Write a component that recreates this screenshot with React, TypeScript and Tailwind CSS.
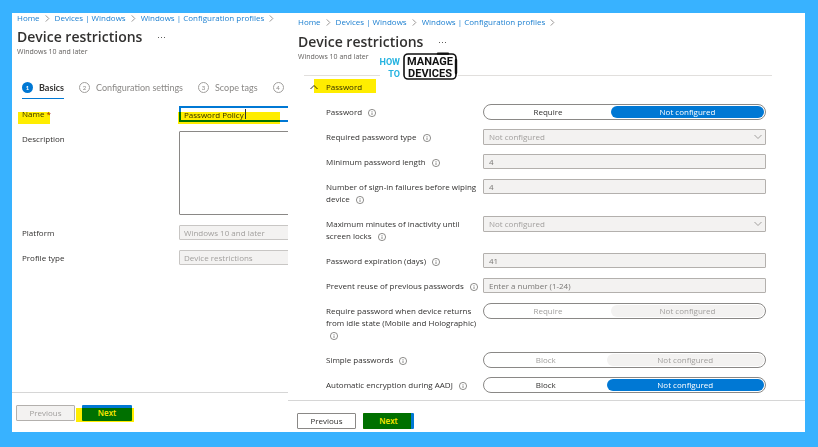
import { useState } from "react";
import type { ReactNode } from "react";

const crumbs = ["Home", "Devices | Windows", "Windows | Configuration profiles"];

const steps = ["Basics", "Configuration settings", "Scope tags", ""];

function Chevron({ className }: { className: string }) {
  return (
    <svg viewBox="0 0 8 8" className={className} fill="none" stroke="currentColor" aria-hidden="true">
      <path d="M0.5 2 4 5.5 7.5 2" />
    </svg>
  );
}

function InfoIcon() {
  return (
    <svg
      viewBox="0 0 16 16"
      className="ml-1 inline-block size-2 align-middle text-[#605e5c]"
      fill="none"
      stroke="currentColor"
      strokeWidth="1.4"
      aria-hidden="true"
    >
      <circle cx="8" cy="8" r="7.2" />
      <path d="M8 7v5M8 4v1.6" />
    </svg>
  );
}

function Breadcrumbs() {
  return (
    <nav aria-label="Breadcrumb" className="whitespace-nowrap leading-[10px] text-[#1b7fd0]">
      <ol className="flex items-center">
        {crumbs.map((crumb) => (
          <li key={crumb} className="flex items-center">
            <a href="#" className="hover:underline">
              {crumb}
            </a>
            <Chevron className="mx-1 size-[7px] -rotate-90 text-[#8a8886]" />
          </li>
        ))}
      </ol>
    </nav>
  );
}

function PageTitle() {
  return (
    <header>
      <div className="flex items-center gap-4">
        <h1 className="text-[14px] font-semibold leading-5 text-[#323130]">Device restrictions</h1>
        <button type="button" aria-label="More" className="flex gap-[2px]">
          <span className="size-px bg-[#605e5c]" />
          <span className="size-px bg-[#605e5c]" />
          <span className="size-px bg-[#605e5c]" />
        </button>
      </div>
      <p className="text-[7px] leading-[10px] text-[#605e5c]">Windows 10 and later</p>
    </header>
  );
}

function Field({ id, label, children }: { id: string; label: ReactNode; children: ReactNode }) {
  return (
    <div className="grid grid-cols-[157px_1fr] items-start">
      <label htmlFor={id} className="pt-[2px] pb-[11px] leading-3">
        {label}
      </label>
      {children}
    </div>
  );
}

function Toggle({ id, first, disabled }: { id: string; first: string; disabled?: boolean }) {
  const [value, setValue] = useState("Not configured");
  return (
    <div
      role="radiogroup"
      aria-labelledby={`${id}-label`}
      className="flex h-4 rounded-full border border-[#8a8886] p-px text-center leading-3"
    >
      {[first, "Not configured"].map((option) => (
        <label
          key={option}
          className={
            disabled
              ? "flex-auto rounded-full text-[#a19f9d] has-checked:bg-[#f3f2f1]"
              : "flex-auto rounded-full has-checked:bg-[#0078d4] has-checked:text-white"
          }
        >
          <input
            type="radio"
            name={id}
            className="sr-only"
            checked={value === option}
            disabled={disabled}
            onChange={() => setValue(option)}
          />
          {option}
        </label>
      ))}
    </div>
  );
}

function ToggleField({ id, label, first, disabled }: { id: string; label: string; first: string; disabled?: boolean }) {
  return (
    <div className="grid grid-cols-[157px_1fr] items-start">
      <span id={`${id}-label`} className="pt-[2px] pb-[11px] leading-3">
        {label} <InfoIcon />
      </span>
      <Toggle id={id} first={first} disabled={disabled} />
    </div>
  );
}

function SelectField({ id, label }: { id: string; label: string }) {
  return (
    <Field id={id} label={<>{label} <InfoIcon /></>}>
      <div className="relative">
        <select
          id={id}
          disabled
          className="block h-4 w-full appearance-none rounded-[1px] border border-[#b3b0ad] bg-[#f3f2f1] px-[5px] leading-3 text-[#a19f9d] opacity-100"
        >
          <option>Not configured</option>
        </select>
        <Chevron className="pointer-events-none absolute top-1 right-1 size-2 text-[#a19f9d]" />
      </div>
    </Field>
  );
}

function NumberField({ id, label, value, placeholder }: { id: string; label: string; value?: string; placeholder?: string }) {
  return (
    <Field id={id} label={<>{label} <InfoIcon /></>}>
      <input
        id={id}
        type="text"
        disabled
        defaultValue={value}
        placeholder={placeholder}
        className="h-[15px] w-full rounded-[1px] border border-[#b3b0ad] bg-[#f3f2f1] px-[5px] leading-3 text-[#797775] placeholder:text-[#797775]"
      />
    </Field>
  );
}

function BasicsPanel() {
  return (
    <section className="flex min-w-0 flex-col overflow-x-clip">
      <div className="pl-[5px]">
        <Breadcrumbs />
        <div className="mt-1">
          <PageTitle />
        </div>
      </div>

      <ol className="mt-[25px] flex gap-[15px] pl-[10px] font-[Lato,sans-serif] text-[9px] leading-3 whitespace-nowrap text-[#8a8886]">
        {steps.map((step, i) => (
          <li
            key={i}
            className={
              i === 0
                ? "flex h-[17px] items-start gap-[6px] border-b border-b-[#0078d4] font-bold text-[#323130]"
                : "flex h-[17px] items-start gap-[6px]"
            }
          >
            <span
              className={
                i === 0
                  ? "flex size-[11px] items-center justify-center rounded-full bg-[#0078d4] text-[6px] text-white"
                  : "flex size-[11px] items-center justify-center rounded-full border border-[#a19f9d] text-[6px]"
              }
            >
              {i + 1}
            </span>
            {step}
          </li>
        ))}
      </ol>

      <form id="basics" className="mt-[7px] pl-[10px]">
        <div className="relative">
          <Field id="name" label={<>Name <span className="text-[#a4262c]">*</span></>}>
            <input
              id="name"
              type="text"
              defaultValue="Password Policy"
              className="h-4 w-[150px] border-2 border-[#0078d4] px-[3px] leading-3 outline-none"
            />
          </Field>
          <span className="pointer-events-none absolute top-[6px] -left-1 h-3 w-8 bg-[#ffed00] mix-blend-multiply" />
          <span className="pointer-events-none absolute top-[6px] left-[156px] h-3 w-[102px] bg-[#ffed00] mix-blend-multiply" />
          <span className="pointer-events-none absolute top-[3px] left-[223px] h-[10px] w-px bg-[#323130]" />
        </div>
        <div className="mb-[10px]">
          <Field id="description" label="Description">
            <textarea
              id="description"
              className="h-[84px] w-[150px] resize-none rounded-[1px] border border-[#8a8886] px-[5px] outline-none"
            />
          </Field>
        </div>
        <Field id="platform" label="Platform">
          <input
            id="platform"
            disabled
            defaultValue="Windows 10 and later"
            className="h-[15px] w-[150px] rounded-[1px] border border-[#c8c6c4] bg-[#f3f2f1] px-1 leading-3 text-[#a19f9d]"
          />
        </Field>
        <Field id="profile" label="Profile type">
          <input
            id="profile"
            disabled
            defaultValue="Device restrictions"
            className="h-[15px] w-[150px] rounded-[1px] border border-[#c8c6c4] bg-[#f3f2f1] px-1 leading-3 text-[#a19f9d]"
          />
        </Field>
      </form>

      <footer className="mt-auto flex gap-[7px] border-t border-[#d6d6d6] pt-3 pb-[11px] pl-1">
        <button
          type="button"
          disabled
          className="h-4 w-[59px] rounded-[1px] border border-[#b3b0ad] bg-[#f3f2f1] leading-3 text-[#a19f9d]"
        >
          Previous
        </button>
        <div className="relative">
          <button type="button" className="block h-4 w-[50px] rounded-[1px] bg-[#0078d4] font-semibold leading-3 text-white">
            Next
          </button>
          <span className="pointer-events-none absolute top-[3px] -left-[6px] h-[14px] w-[58px] bg-[#ffed00] mix-blend-multiply" />
        </div>
      </footer>
    </section>
  );
}

function Logo() {
  return (
    <svg
      viewBox="0 0 78 28"
      className="absolute top-[39px] left-[92px] h-7 w-[78px] bg-white font-[Roboto,'Liberation_Sans',sans-serif] font-bold"
      role="img"
      aria-label="How to manage devices"
    >
      <g fill="#25b3e0" fontSize="9" textAnchor="end">
        <text x="20" y="13">HOW</text>
        <text x="20" y="25">TO</text>
      </g>
      <rect x="24" y="2" width="52" height="25" rx="4" fill="none" stroke="#111" strokeWidth="1.6" />
      <path d="M76 8v13M58 1.6h10" stroke="#111" strokeWidth="2.4" strokeLinecap="round" />
      <g fill="#111" fontSize="11" textAnchor="middle">
        <text x="50" y="13">MANAGE</text>
        <text x="50" y="25">DEVICES</text>
      </g>
    </svg>
  );
}

function SettingsPanel() {
  const [open, setOpen] = useState(true);
  return (
    <section className="relative flex min-w-0 flex-col">
      <div className="mt-1 pl-[10px]">
        <Breadcrumbs />
        <div className="mt-[5px]">
          <PageTitle />
        </div>
      </div>

      <div className="mt-[13px] mr-[33px] ml-4 border-t border-[#e1dfdd]" />
      <Logo />

      <form id="settings" className="-mb-1 pr-[39px] pl-[38px]">
        <button
          type="button"
          aria-expanded={open}
          onClick={() => setOpen(!open)}
          className="relative mt-[5px] mb-[11px] block leading-3"
        >
          <Chevron className="absolute top-[2px] -left-4 size-2 rotate-180 text-[#323130]" />
          Password
          <span className="pointer-events-none absolute -top-[2px] -left-3 h-[14px] w-[62px] bg-[#ffed00] mix-blend-multiply" />
        </button>
        {open && (
          <>
            <ToggleField id="password" label="Password" first="Require" />
            <SelectField id="type" label="Required password type" />
            <NumberField id="length" label="Minimum password length" value="4" />
            <NumberField id="failures" label="Number of sign-in failures before wiping device" value="4" />
            <SelectField id="inactivity" label="Maximum minutes of inactivity until screen locks" />
            <NumberField id="expiration" label="Password expiration (days)" value="41" />
            <NumberField id="reuse" label="Prevent reuse of previous passwords" placeholder="Enter a number (1-24)" />
            <ToggleField
              id="idle"
              label="Require password when device returns from idle state (Mobile and Holographic)"
              first="Require"
              disabled
            />
            <ToggleField id="simple" label="Simple passwords" first="Block" disabled />
            <ToggleField id="encryption" label="Automatic encryption during AADJ" first="Block" />
          </>
        )}
      </form>

      <footer className="mt-auto flex gap-[7px] border-t border-[#d6d6d6] pt-3 pb-[3px] pl-[9px]">
        <button type="button" className="h-4 w-[59px] rounded-[1px] border border-[#8a8886] bg-white leading-3">
          Previous
        </button>
        <div className="relative">
          <button type="button" className="block h-4 w-[51px] rounded-[1px] bg-[#0078d4] font-semibold leading-3 text-white">
            Next
          </button>
          <span className="pointer-events-none absolute inset-y-0 left-0 w-12 bg-[#ffed00] mix-blend-multiply" />
        </div>
      </footer>
    </section>
  );
}

export default function App() {
  return (
    <main className="flex min-h-screen bg-[#38b2ff] pt-[13px] pr-[13px] pb-[15px] pl-3 font-['Open_Sans','Noto_Sans',sans-serif] text-[8px] text-[#323130]">
      <div className="grid flex-1 grid-cols-[276fr_517fr] bg-white">
        <BasicsPanel />
        <SettingsPanel />
      </div>
    </main>
  );
}
